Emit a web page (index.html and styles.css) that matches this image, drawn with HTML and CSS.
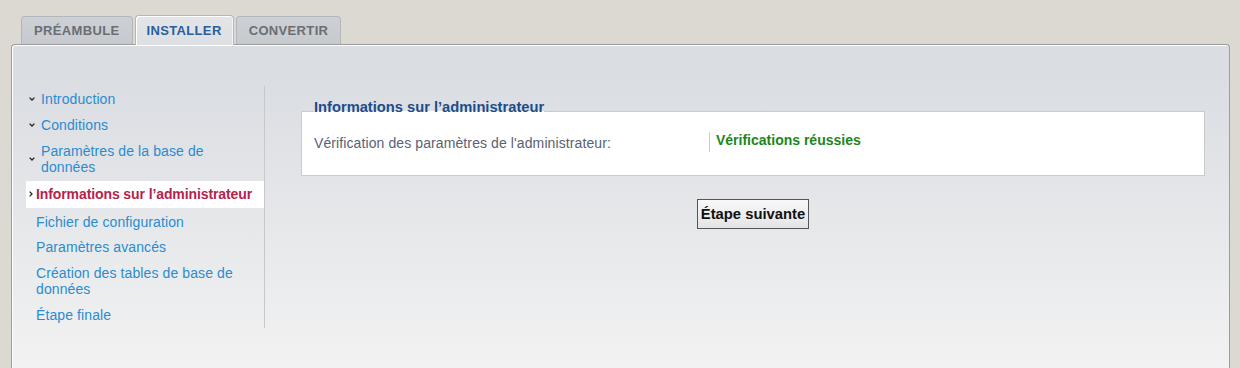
FILE: index.html
```html
<!DOCTYPE html>
<html lang="fr">
<head>
    <meta charset="UTF-8">
    <title>Installation</title>
    <link rel="stylesheet" href="styles.css">
</head>
<body>
<ul class="tabs">
    <li class="tab">PRÉAMBULE</li>
    <li class="tab active">INSTALLER</li>
    <li class="tab">CONVERTIR</li>
</ul>

<div class="panel">
    <ul class="steps">
        <li class="step done">
            <svg class="arrow" width="6" height="4" viewBox="0 0 6 4"><path d="M0.6 0.6 L3 3 L5.4 0.6" fill="none" stroke="#222" stroke-width="1.3"/></svg>
            <span>Introduction</span>
        </li>
        <li class="step done">
            <svg class="arrow" width="6" height="4" viewBox="0 0 6 4"><path d="M0.6 0.6 L3 3 L5.4 0.6" fill="none" stroke="#222" stroke-width="1.3"/></svg>
            <span>Conditions</span>
        </li>
        <li class="step done">
            <svg class="arrow" width="6" height="4" viewBox="0 0 6 4"><path d="M0.6 0.6 L3 3 L5.4 0.6" fill="none" stroke="#222" stroke-width="1.3"/></svg>
            <span>Paramètres de la base de données</span>
        </li>
        <li class="step current">
            <svg class="arrow" width="4" height="6" viewBox="0 0 4 6"><path d="M0.6 0.6 L3 3 L0.6 5.4" fill="none" stroke="#222" stroke-width="1.3"/></svg>
            <span>Informations sur l’administrateur</span>
        </li>
        <li class="step">Fichier de configuration</li>
        <li class="step">Paramètres avancés</li>
        <li class="step">Création des tables de base de données</li>
        <li class="step">Étape finale</li>
    </ul>

    <div class="content">
        <fieldset class="admin-box">
            <legend>Informations sur l’administrateur</legend>
            <div class="check-row">
                <span class="check-label">Vérification des paramètres de l'administrateur:</span>
                <span class="check-result">Vérifications réussies</span>
            </div>
        </fieldset>
        <button class="next-btn">Étape suivante</button>
    </div>
</div>
</body>
</html>
```

FILE: styles.css
```css
html, body {
    margin: 0;
    padding: 0;
}
body {
    background-color: #dcd9d3;
    font-family: "Liberation Sans", Arial, sans-serif;
    font-size: 14px;
    padding-top: 15px;
    overflow: hidden;
}
.tabs {
    list-style: none;
    margin: 0;
    padding: 0 0 0 21px;
    display: flex;
    align-items: flex-end;
    gap: 2px;
}
.tab {
    height: 27px;
    line-height: 28px;
    padding: 0 12px 0 12px;
    border: 1px solid #b3b6bb;
    border-bottom: none;
    border-radius: 4px 4px 0 0;
    background: linear-gradient(#cdd0d4, #c6c9ce);
    color: #6b6e73;
    font-size: 13px;
    font-weight: bold;
    letter-spacing: 0.35px;
}
.tab.active {
    height: 29px;
    line-height: 30px;
    margin-bottom: -1px;
    padding: 0 11px 0 11px;
    position: relative;
    z-index: 1;
    background: linear-gradient(#e3e5e8, #dcdfe3);
    color: #2a5e9c;
    box-shadow: inset 1px 1px 0 #fff, inset -1px 0 0 #f4f5f6;
}
.panel {
    margin: 0 10px 0 11px;
    min-height: 282px;
    border: 1px solid #9c9c9c;
    border-bottom: none;
    border-radius: 4px 4px 0 0;
    background: linear-gradient(#dadde2 10%, #f2f2f2 100%);
    box-shadow: inset 1px 1px 0 #fff;
    padding: 41px 24px 0 14px;
    display: flex;
}
.steps {
    list-style: none;
    margin: 0;
    padding: 0;
    width: 238px;
    border-right: 1px solid #c6c8cb;
    flex-shrink: 0;
    align-self: flex-start;
}
.step {
    display: flex;
    align-items: center;
    padding: 5px 10px 5px 10px;
    line-height: 16px;
    color: #2a8ccf;
    letter-spacing: 0.1px;
}
.step.done {
    padding-left: 3px;
}
.step.done .arrow {
    margin-right: 6px;
    flex-shrink: 0;
}
.step.current {
    margin-top: 1px;
    padding: 5px 0 6px 3px;
    background: #fff;
    color: #b3234d;
    font-weight: bold;
    letter-spacing: -0.1px;
}
.step.current .arrow {
    margin-right: 3px;
    flex-shrink: 0;
}
.step.current + .step {
    padding-top: 6px;
    padding-bottom: 4px;
}
.content {
    flex: 1;
    padding: 14px 0 0 36px;
}
.admin-box {
    margin: 0;
    padding: 0 12px;
    min-width: 0;
    border: 1px solid #cbcbcb;
    background: #fff;
}
.admin-box legend {
    padding: 0 0 8px 0;
    line-height: 15px;
    font-size: 14.7px;
    font-weight: bold;
    color: #1c4c8b;
}
.check-row {
    display: flex;
    height: 20px;
    margin: 9px 0 23px 0;
}
.check-label {
    width: 395px;
    padding-top: 3px;
    line-height: 16px;
    color: #5a6174;
    letter-spacing: 0.1px;
}
.check-result {
    border-left: 1px solid #cccccc;
    padding-left: 6px;
    line-height: 16px;
    color: #1b861b;
    font-weight: bold;
}
.next-btn {
    display: block;
    margin: 23px auto 0;
    height: 30px;
    padding: 0 3px;
    border: 1px solid #555;
    border-radius: 0;
    background: linear-gradient(#f8f8f8, #e4e4e4);
    color: #111;
    font-family: "Liberation Sans", Arial, sans-serif;
    font-size: 14.8px;
    font-weight: bold;
}
```
